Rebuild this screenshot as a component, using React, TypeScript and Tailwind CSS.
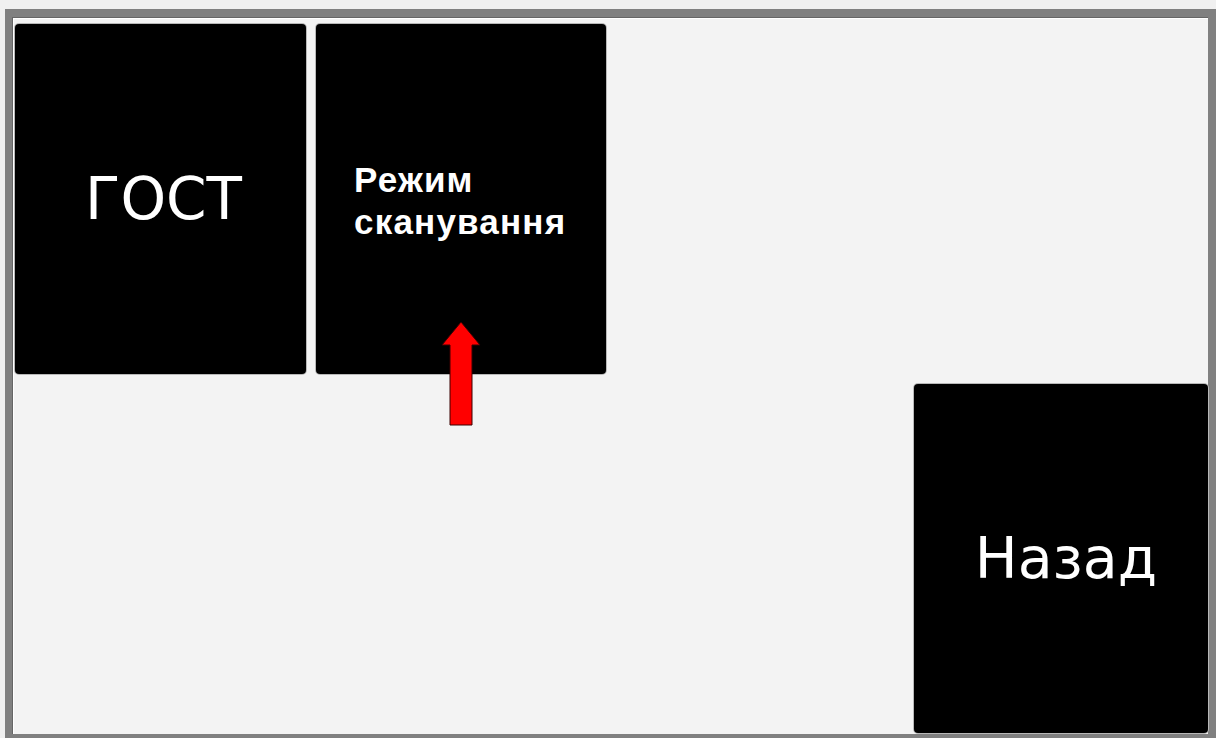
import React from "react";

const tile =
  "relative rounded-[4px] bg-black shadow-[0_0_0_1px_#b8b8b8] text-white flex";

function UpArrow() {
  return (
    <svg
      width="40"
      height="105"
      viewBox="0 0 40 105"
      className="absolute left-[125px] top-[297px]"
    >
      <path
        d="M20 1 L39 24 L31 24 L31 104 L9 104 L9 24 L1 24 Z"
        fill="#ff0000"
        stroke="#3a0000"
        strokeWidth="1"
      />
    </svg>
  );
}

export default function App() {
  return (
    <div className="w-[1216px] h-[738px] overflow-hidden bg-[#f0f0f0] pt-[9px] pl-[5px]">
      {/* window frame */}
      <div className="h-[729px] border-l-[7px] border-t-[8px] border-r-[8px] border-b-[4px] border-[#808080]">
        <div className="h-full border-l border-t border-[#666666] bg-[#f3f3f3] shadow-[inset_1px_1px_0_#ffffff] pl-[2px] pt-[6px] flex flex-col gap-[10px]">
          <div className="flex gap-[10px] h-[350px]">
            <div
              className={`${tile} w-[291px] items-center justify-center text-[58px] pl-[6px]`}
              style={{ fontFamily: '"DejaVu Sans", sans-serif' }}
            >
              ГОСТ
            </div>
            <div
              className={`${tile} w-[290px] flex-col pl-[38px] pt-[135px] text-[35px] font-bold leading-[42px] tracking-[1.2px]`}
              style={{ fontFamily: '"Liberation Sans", Arial, sans-serif' }}
            >
              <span>Режим</span>
              <span>сканування</span>
              <UpArrow />
            </div>
          </div>
          <div className="flex justify-end h-[349px]">
            <div
              className={`${tile} w-[294px] items-center justify-center text-[57px] pl-[10px]`}
              style={{ fontFamily: '"DejaVu Sans", sans-serif' }}
            >
              Назад
            </div>
          </div>
        </div>
      </div>
    </div>
  );
}
